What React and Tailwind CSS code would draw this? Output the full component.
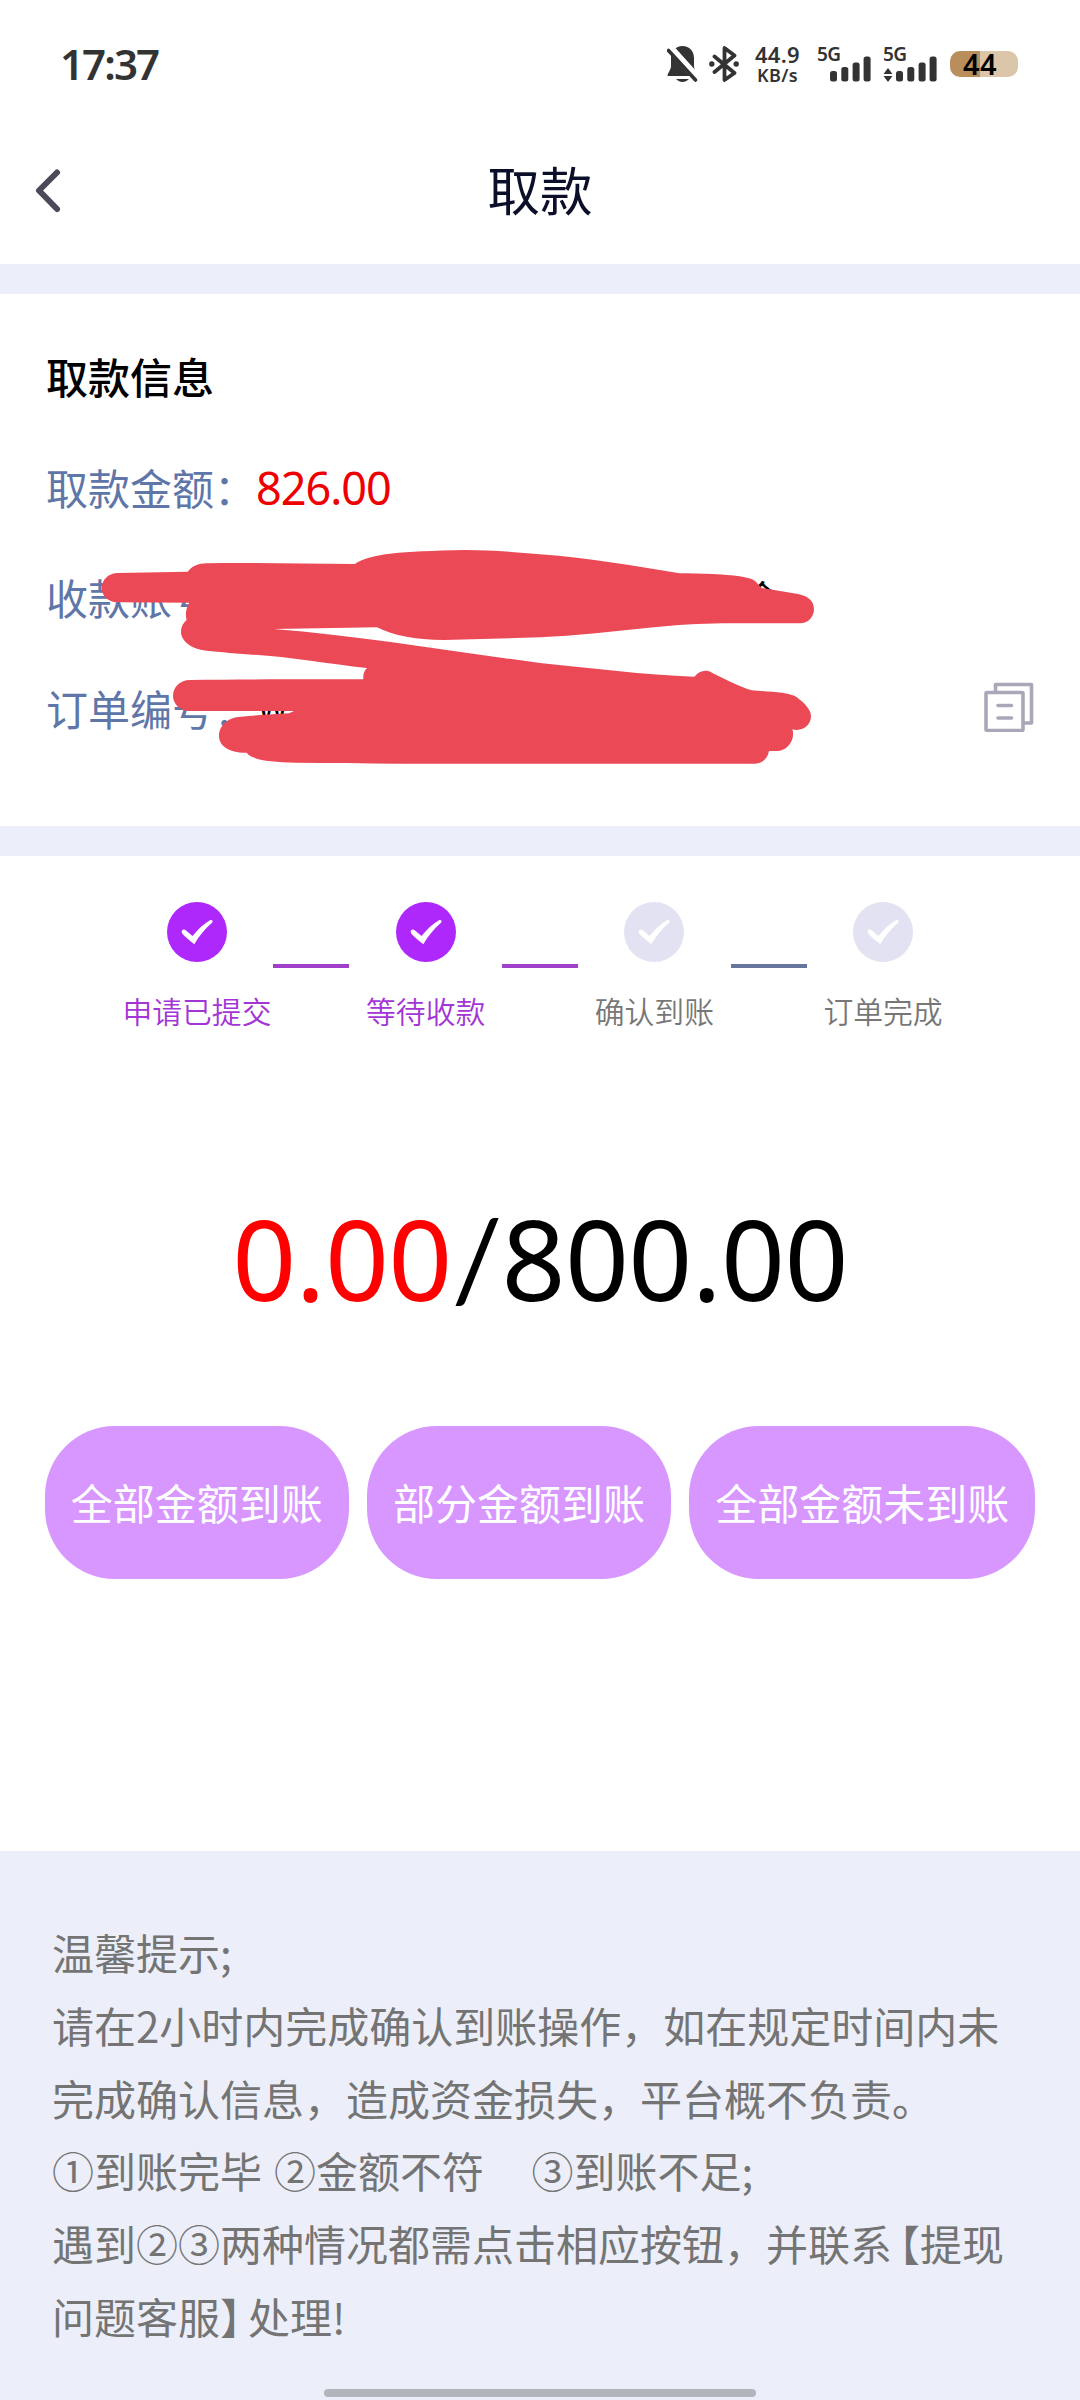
import clsx from "clsx";

const steps = [
  { label: "申请已提交", done: true },
  { label: "等待收款", done: true },
  { label: "确认到账", done: false },
  { label: "订单完成", done: false },
];

function SignalBars() {
  return (
    <svg width="41" height="26" viewBox="0 0 41 26" fill="#333">
      <rect x="0" y="15" width="7" height="10.5" rx="2.5" />
      <rect x="11.3" y="11" width="7" height="14.5" rx="2.5" />
      <rect x="22.6" y="6.5" width="7" height="19" rx="2.5" />
      <rect x="33.6" y="0.5" width="7" height="25" rx="2.5" />
    </svg>
  );
}

function StatusBar() {
  return (
    <header className="flex h-[128px] items-center justify-between pr-[62px] pl-[60px] text-[#333]">
      <span className="font-['Noto_Sans'] text-[42px] leading-none font-semibold tracking-[-1.9px]">
        17:37
      </span>
      <div className="flex h-9 items-end font-['Noto_Sans'] font-semibold">
        <svg width="31" height="36" viewBox="0 0 31 36">
          <path
            d="M15.500 0C8.500 0 4 5 4 12V20C4 24 1 26 .5 30H30C29 26 27 24 27 20V12C27 5 22.500 0 15.500 0Z"
            fill="#333"
          />
          <path d="M9 33H22C20 35 18 36 15.500 36S11 35 9 33Z" fill="#333" />
          <path d="M3 2L31 33" stroke="#fff" strokeWidth="8" />
          <path d="M1.500 4.500L28.500 34" stroke="#333" strokeWidth="3.600" strokeLinecap="round" />
        </svg>
        <svg className="ml-[11px]" width="30" height="36" viewBox="0 0 30 36" fill="none">
          <path
            d="M5.500 10.500L25.500 27L15.500 34V2L25.500 9.500L5.500 26"
            stroke="#333"
            strokeWidth="3.800"
            strokeLinecap="round"
            strokeLinejoin="round"
          />
          <circle cx="2.800" cy="18" r="2.700" fill="#333" />
          <circle cx="27.200" cy="18" r="2.700" fill="#333" />
        </svg>
        <div className="ml-[13px] flex h-9 w-[51px] flex-col items-center justify-between">
          <span className="text-[22px] leading-[17px] tracking-[0.3px]">44.9</span>
          <span className="text-[18px] leading-[13px] tracking-[0.3px]">KB/s</span>
        </div>
        <div className="relative ml-[14px] flex h-9 w-[54px] items-end justify-end">
          <span className="absolute top-0 left-0 text-[19px] leading-[16px] tracking-[-0.5px]">5G</span>
          <SignalBars />
        </div>
        <div className="relative ml-[12px] flex h-9 w-[54px] items-end justify-between">
          <span className="absolute top-0 left-0 text-[19px] leading-[16px] tracking-[-0.5px]">5G</span>
          <svg width="10" height="14" viewBox="0 0 10 14" fill="#333">
            <path d="M5 0L9.500 6H.5ZM5 14L.5 8H9.500Z" />
          </svg>
          <SignalBars />
        </div>
        <div className="mb-[5px] ml-[13px] flex h-[26px] w-[68px] items-center rounded-[10px] bg-linear-to-r from-[#b98e5b] from-44% to-[#dcc6a9] to-44% pb-px pl-[13px] text-[29px] leading-none tracking-[0.5px] text-black">
          44
        </div>
      </div>
    </header>
  );
}

function CopyIcon() {
  return (
    <svg width="50" height="50" viewBox="0 0 50 50" fill="none" stroke="#aaa8b8" strokeWidth="3.600">
      <rect x="2" y="10.500" width="37" height="38" rx="1" />
      <path d="M11.500 10V2.500H47.500V41H39" strokeLinejoin="round" />
      <path d="M14 23.500H27.500M14 36H27.500" strokeLinecap="round" />
    </svg>
  );
}

function Scribble() {
  return (
    <svg className="absolute top-[246px] left-[90px]" width="740" height="230" viewBox="90 540 740 230">
      <path
        fill="#eb4956"
        d="M101.600 588C102 580 108 573.500 117 573L187.700 571.700C192 566 198 563.500 206.600 563.300C250 562.500 300 563.500 354.700 564C372 553 400 551.500 465 550C490 550 515 552 540 554.300C590 558 635 566 679.500 573.300C700 573.500 735 574 750 578.500C756 580 758 585 762 588L798 594C808 596 814 601 814 609C814 617 808 623.300 800 623.300H722.500C700 623.500 675 625 653.600 627.300C615 631 575 636 540 637.300L444 640C415 640 392 635 377 627.300L273.800 629C360 636 450 651 540 663C590 668 645 675 694.300 676.700C699 671 706 669 712 672.700C725 679 740 687 751.800 690.300C770 692 788 692 796.500 697C803 702 811 709 811 716C811 725 803 732 792.400 729.300C796 742 785 751 777.600 751H769C768 758 762 763.700 755 763.700H540C450 763.500 370 764 296 762.700C270 762 252 760 246.600 752.700C229 753 219 746 219 735.700C219 726 228 717 241 716.700C260 715 275 714 289 713.300L294 711H187.700C180 710 173 704 173 696C173 687 180 680 190 680C240 679 300 679.500 363.300 679.300C363 674 364 671 367 668C330 664 290 657 258 655C240 654 220 652 206.600 650.700C190 649 181 640 181 631.700C181 627 183 623 186.600 620C185 615 186 607 189.400 602.700L117 602.300C108 602 102 596 101.600 588Z"
      />
    </svg>
  );
}

function InfoRow({ label, children }) {
  return (
    <div className="flex h-[110.7px] items-center">
      <span className="w-[210px] text-[#5f76a8]">{label}</span>
      {children}
    </div>
  );
}

function Step({ label, done }) {
  return (
    <div className="flex w-[153px] flex-col items-center">
      <svg width="60" height="60" viewBox="0 0 60 60">
        <circle cx="30" cy="30" r="30" fill={done ? "#ae28fb" : "#e3e2f2"} />
        <path
          d="M14.800 30.500C14 28 17 26.500 19 28.500L25.500 34C31 27.500 37 21.500 43 18.300C45 17.500 46.500 19 45 20.700C38 27 32 34 27.300 42.300Q15.500 33 14.800 30.500Z"
          fill="#fff"
        />
      </svg>
      <span
        className={clsx(
          "mt-[28px] text-[29.8px] leading-10 font-[350] whitespace-nowrap",
          done ? "text-[#a335d6]" : "text-[#777]"
        )}
      >
        {label}
      </span>
    </div>
  );
}

export default function App() {
  return (
    <div className="flex h-[2400px] w-[1080px] flex-col overflow-hidden bg-white font-['Noto_Sans_CJK_SC',sans-serif] text-[42px]">
      <StatusBar />

      <nav className="grid h-[136px] grid-cols-[1fr_auto_1fr] items-center pb-[11px]">
        <svg className="ml-[34px]" width="28" height="46" viewBox="0 0 28 46" fill="none">
          <path
            d="M23 4.500L5 22.500L23 41"
            stroke="#4a4a58"
            strokeWidth="6"
            strokeLinecap="round"
            strokeLinejoin="round"
          />
        </svg>
        <h1 className="pb-[4px] text-[52.5px] leading-none text-[#0c0f2a]">取款</h1>
      </nav>

      <section className="relative h-[592px] border-y-[30px] border-[#eceff9] px-[46px] pt-[26px]">
        <h2 className="flex h-[110.7px] items-center font-medium text-black">取款信息</h2>
        <InfoRow label="取款金额：">
          <span className="pt-[4px] font-['Noto_Sans'] text-[45px] tracking-[-1px] text-[#ee0000]">826.00</span>
        </InfoRow>
        <InfoRow label="收款账号：">
          <span className="ml-[486px] pt-[2px] text-[40px] text-black">金</span>
        </InfoRow>
        <InfoRow label="订单编号：">
          <span className="ml-[2px] text-[34px] text-black">W</span>
          <button className="ml-auto">
            <CopyIcon />
          </button>
        </InfoRow>
        <Scribble />
      </section>

      <section className="flex h-[262px] justify-center pt-[46px]">
        {steps.map((step, i) => (
          <div key={step.label} className="flex">
            {i > 0 && (
              <span
                className={clsx("mt-[62px] h-1 w-[75.7px]", step.done || i === 2 ? "bg-[#a040c8]" : "bg-[#66759b]")}
              />
            )}
            <Step {...step} />
          </div>
        ))}
      </section>

      <p className="h-[308px] pt-[74px] text-center font-['Noto_Sans'] text-[112px] leading-[132px] tracking-[-0.7px] text-black">
        <span className="text-[#ff0000]">0.00</span>
        <span className="font-['Lato']">/</span>800.00
      </p>

      <section className="flex h-[425px] items-start gap-[18.5px] px-[45px] text-white">
        <button className="h-[153px] flex-[303] rounded-[70px] bg-[#d896ff] pb-[2px] whitespace-nowrap">全部金额到账</button>
        <button className="h-[153px] flex-[303] rounded-[70px] bg-[#d896ff] pb-[2px] whitespace-nowrap">部分金额到账</button>
        <button className="h-[153px] flex-[345] rounded-[70px] bg-[#d896ff] pb-[2px] whitespace-nowrap">全部金额未到账</button>
      </section>

      <footer className="flex flex-1 flex-col items-center bg-[#eceff9]">
        <div className="w-full pt-[65px] pl-[52px] leading-[72.8px] whitespace-pre text-[#747474]">
          <p>温馨提示;</p>
          <p>请在2小时内完成确认到账操作，如在规定时间内未</p>
          <p>完成确认信息，造成资金损失，平台概不负责。</p>
          <p className="[word-spacing:2.5px]">{"①到账完毕 ②金额不符    ③到账不足;"}</p>
          <p>
            遇到②③两种情况都需点击相应按钮，并联系
            <span className="ml-[7px] [font-feature-settings:'halt']">【</span>提现
          </p>
          <p>
            问题客服<span className="mr-[7px] [font-feature-settings:'halt']">】</span>处理!
          </p>
        </div>
        <div className="mt-auto mb-[3px] h-2 w-[432px] rounded-full bg-[#b3b5bd]" />
      </footer>
    </div>
  );
}
